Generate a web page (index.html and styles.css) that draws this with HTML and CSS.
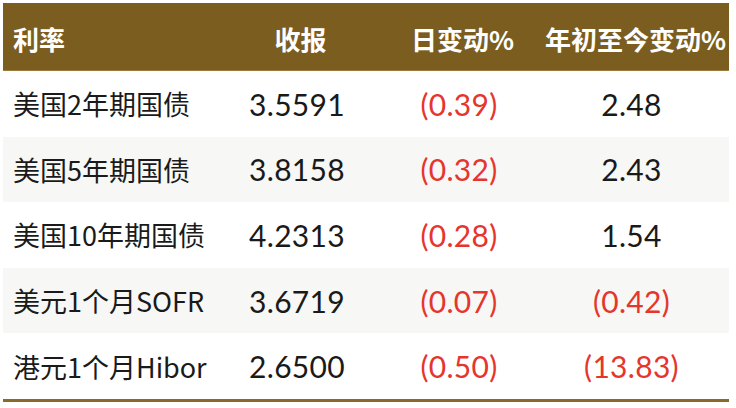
FILE: index.html
```html
<!DOCTYPE html>
<html lang="zh-CN">
<head>
<meta charset="utf-8">
<title>利率</title>
<link rel="stylesheet" href="styles.css">
</head>
<body>
<div class="table">
  <div class="row head">
    <div class="cell name">利率</div>
    <div class="cell">收报</div>
    <div class="cell">日变动%</div>
    <div class="cell last">年初至今变动%</div>
  </div>
  <div class="row">
    <div class="cell name">美国2年期国债</div>
    <div class="cell num">3.5591</div>
    <div class="cell num neg">(0.39)</div>
    <div class="cell num last">2.48</div>
  </div>
  <div class="row alt">
    <div class="cell name">美国5年期国债</div>
    <div class="cell num">3.8158</div>
    <div class="cell num neg">(0.32)</div>
    <div class="cell num last">2.43</div>
  </div>
  <div class="row">
    <div class="cell name">美国10年期国债</div>
    <div class="cell num">4.2313</div>
    <div class="cell num neg">(0.28)</div>
    <div class="cell num last">1.54</div>
  </div>
  <div class="row alt">
    <div class="cell name">美元1个月SOFR</div>
    <div class="cell num">3.6719</div>
    <div class="cell num neg">(0.07)</div>
    <div class="cell num neg last">(0.42)</div>
  </div>
  <div class="row final">
    <div class="cell name">港元1个月Hibor</div>
    <div class="cell num">2.6500</div>
    <div class="cell num neg">(0.50)</div>
    <div class="cell num neg last">(13.83)</div>
  </div>
</div>
</body>
</html>
```
FILE: styles.css
```css
html, body {
  margin: 0;
  padding: 0;
  background: #ffffff;
}

body {
  font-family: "Noto Sans CJK SC", "Noto Sans", sans-serif;
  color: #1a1a1a;
}

.table {
  margin: 3px 0 0 3px;
  width: 726px;
  display: flex;
  flex-direction: column;
}

.row {
  display: grid;
  grid-template-columns: 227px 134px 190px 175px;
  height: 65.6px;
  align-items: center;
}

.row.alt {
  background: #f7f7f5;
}

.row.head {
  height: 68px;
  background: #7b5d20;
  border-bottom: 1px solid #9a7a3e;
  color: #ffffff;
  font-weight: 700;
  font-size: 26px;
  padding-top: 4px;
  box-sizing: border-box;
}

.row.head .cell {
  padding-left: 7px;
}

.row.head .cell.last {
  padding-left: 8px;
  padding-right: 20px;
}

.row.final {
  border-bottom: 3px solid #8a6a28;
}

.cell {
  display: flex;
  justify-content: center;
  white-space: nowrap;
}

.cell.name {
  justify-content: flex-start;
  padding-left: 10px;
  font-size: 27px;
}

.row.head .cell.name {
  font-size: 26px;
  padding-left: 10px;
}

.cell.last {
  padding-right: 20px;
}

.num {
  font-family: "Lato", "Noto Sans", sans-serif;
  font-size: 30px;
  color: #1a1a1a;
  letter-spacing: 0.3px;
}

.num.neg {
  color: #e5352d;
}
```
